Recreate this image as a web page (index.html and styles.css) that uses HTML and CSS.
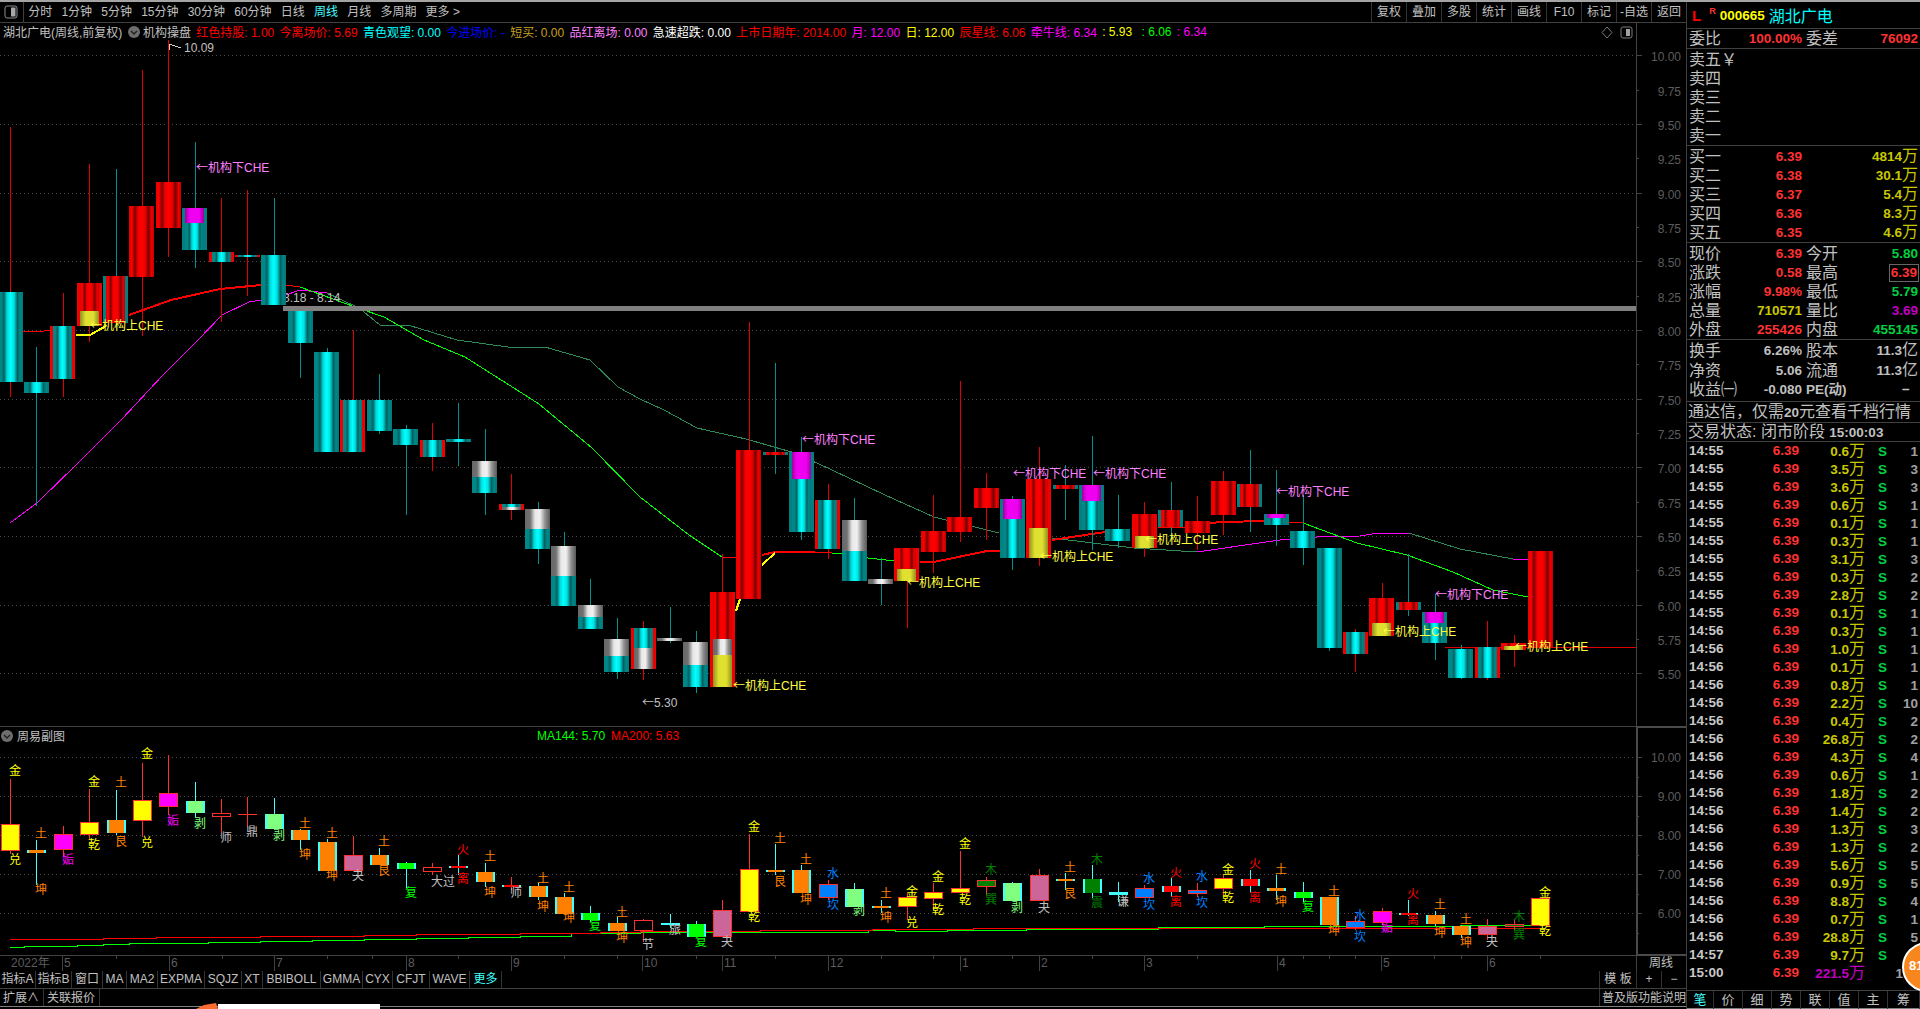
FILE: index.html
```html
<!DOCTYPE html>
<html lang="zh-CN">
<head>
    <meta charset="UTF-8">
    <title>湖北广电 周线</title>
    <link rel="stylesheet" href="styles.css">
</head>
<body>
<div class="app">
    <div class="main">
        <!-- period toolbar -->
        <div class="toolbar">
            <div class="periods">
                <span class="panel-btn"><svg width="14" height="14" viewBox="0 0 14 14"><rect x="1" y="1" width="12" height="12" rx="2" fill="none" stroke="#8c8c8c"/><rect x="7" y="2.5" width="4.5" height="9" fill="#a8a8a8"/></svg></span>
                <span>分时</span><span>1分钟</span><span>5分钟</span><span>15分钟</span><span>30分钟</span><span>60分钟</span><span>日线</span><span class="on">周线</span><span>月线</span><span>多周期</span><span>更多 &gt;</span>
            </div>
            <div class="tools">
                <span>复权</span><span>叠加</span><span>多股</span><span>统计</span><span>画线</span><span>F10</span><span>标记</span><span>-自选</span><span>返回</span>
            </div>
        </div>

        <!-- price chart -->
        <div class="pane pane-price">
            <svg id="priceChart" class="chart" width="1686" height="703" viewBox="0 23 1686 703"></svg>
            <div class="legend">
                <span class="gray">湖北广电(周线,前复权)</span>
                <svg class="fold" width="12" height="12" viewBox="0 0 12 12"><circle cx="6" cy="6" r="6" fill="#6e6e6e"/><path d="M3 5l3 3 3-3" fill="none" stroke="#222" stroke-width="1.5"/></svg>
                <span class="gray">机构操盘</span>
                <span class="red">红色持股: 1.00</span>
                <span class="red">今离场价: 5.69</span>
                <span class="cyan">青色观望: 0.00</span>
                <span class="blue">今进场价: -</span>
                <span class="gold">短买: 0.00</span>
                <span class="pink">品红离场: 0.00</span>
                <span class="white">急速超跌: 0.00</span>
                <span class="red">上市日期年: 2014.00</span>
                <span class="magenta">月: 12.00</span>
                <span class="yellow">日: 12.00</span>
                <span class="red">辰星线: 6.06</span>
                <span class="magenta">牵牛线: 6.34</span>
                <span class="yellow">: 5.93</span>
                <span class="green wide">: 6.06</span>
                <span class="magenta">: 6.34</span>
            </div>
        </div>

        <!-- sub chart and date axis -->
        <div class="pane pane-sub">
            <svg id="subChart" class="chart" width="1686" height="245" viewBox="0 726 1686 245"></svg>
            <div class="legend legend-sub">
                <svg class="fold" width="12" height="12" viewBox="0 0 12 12"><circle cx="6" cy="6" r="6" fill="#6e6e6e"/><path d="M3 5l3 3 3-3" fill="none" stroke="#222" stroke-width="1.5"/></svg>
                <span class="gray">周易副图</span>
                <span class="green ma">MA144: 5.70</span>
                <span class="red">MA200: 5.63</span>
            </div>
        </div>

        <div class="row-indicators">
            <div class="ind-tabs">
                <span>指标A</span><span>指标B</span><span>窗口</span><span>MA</span><span>MA2</span><span>EXPMA</span><span>SQJZ</span><span>XT</span><span>BBIBOLL</span><span>GMMA</span><span>CYX</span><span>CFJT</span><span>WAVE</span><span class="on">更多</span>
            </div>
            <div class="ind-right">
                <span class="spaced">模 板</span><span>+</span><span>−</span>
            </div>
        </div>
        <div class="row-bottom">
            <div class="bottom-tabs"><span>扩展∧</span><span>关联报价</span></div>
            <div class="bottom-right">普及版功能说明</div>
        </div>
    </div>

    <!-- quote panel -->
    <aside class="side">
        <div class="stock-head">
            <span class="mark-l">L</span><span class="mark-r">R</span><span class="code">000665</span><span class="name">湖北广电</span>
        </div>
        <div class="block block-ratio">
            <div class="qrow"><div class="cell"><span>委比</span><b class="red">100.00%</b></div><div class="cell"><span>委差</span><b class="red">76092</b></div></div>
        </div>
        <div class="block">
            <div class="qrow"><div class="cell"><span>卖五￥</span></div></div>
            <div class="qrow"><div class="cell"><span>卖四</span></div></div>
            <div class="qrow"><div class="cell"><span>卖三</span></div></div>
            <div class="qrow"><div class="cell"><span>卖二</span></div></div>
            <div class="qrow"><div class="cell"><span>卖一</span></div></div>
        </div>
        <div class="block">
            <div class="qrow"><div class="cell"><span>买一</span><b class="red">6.39</b></div><div class="cell end"><b class="olive">4814<i>万</i></b></div></div>
            <div class="qrow"><div class="cell"><span>买二</span><b class="red">6.38</b></div><div class="cell end"><b class="olive">30.1<i>万</i></b></div></div>
            <div class="qrow"><div class="cell"><span>买三</span><b class="red">6.37</b></div><div class="cell end"><b class="olive">5.4<i>万</i></b></div></div>
            <div class="qrow"><div class="cell"><span>买四</span><b class="red">6.36</b></div><div class="cell end"><b class="olive">8.3<i>万</i></b></div></div>
            <div class="qrow"><div class="cell"><span>买五</span><b class="red">6.35</b></div><div class="cell end"><b class="olive">4.6<i>万</i></b></div></div>
        </div>
        <div class="block">
            <div class="qrow"><div class="cell"><span>现价</span><b class="red">6.39</b></div><div class="cell"><span>今开</span><b class="up">5.80</b></div></div>
            <div class="qrow"><div class="cell"><span>涨跌</span><b class="red">0.58</b></div><div class="cell"><span>最高</span><b class="red boxed">6.39</b></div></div>
            <div class="qrow"><div class="cell"><span>涨幅</span><b class="red">9.98%</b></div><div class="cell"><span>最低</span><b class="up">5.79</b></div></div>
            <div class="qrow"><div class="cell"><span>总量</span><b class="olive">710571</b></div><div class="cell"><span>量比</span><b class="violet">3.69</b></div></div>
            <div class="qrow"><div class="cell"><span>外盘</span><b class="red">255426</b></div><div class="cell"><span>内盘</span><b class="up">455145</b></div></div>
        </div>
        <div class="block block-fund">
            <div class="qrow"><div class="cell"><span>换手</span><b>6.26%</b></div><div class="cell"><span>股本</span><b>11.3<i>亿</i></b></div></div>
            <div class="qrow"><div class="cell"><span>净资</span><b>5.06</b></div><div class="cell"><span>流通</span><b>11.3<i>亿</i></b></div></div>
            <div class="qrow"><div class="cell"><span>收益㈠</span><b>-0.080</b></div><div class="cell"><b>PE(动)</b><b class="dash">−</b></div></div>
        </div>
        <div class="notice">通达信，仅需<b>20</b>元查看千档行情</div>
        <div class="notice">交易状态: 闭市阶段 <b>15:00:03</b></div>
        <div id="tickList" class="ticks"></div>
        <div class="side-tabs">
            <span class="on">笔</span><span>价</span><span>细</span><span>势</span><span>联</span><span>值</span><span>主</span><span>筹</span>
        </div>
    </aside>
</div>

<div class="badge">81</div>
<svg class="taskbar-hint" width="190" height="6" viewBox="0 0 190 6"><path d="M0 6L8 2 20 0 22 6z" fill="#ff6a30"/><rect x="22" y="1" width="162" height="5" fill="#fff"/></svg>

<script src="chart.js"></script>
</body>
</html>
```

FILE: styles.css
```css
* { box-sizing: border-box; }

html, body {
    margin: 0;
    height: 100%;
    background: #000;
    overflow: hidden;
}

body {
    position: relative;
    width: 1920px;
    height: 1009px;
    color: #c0c0c0;
    font: 12px "Liberation Sans", "Noto Sans CJK SC", sans-serif;
}

.app {
    display: flex;
    height: 1009px;
    border-top: 2px solid #a4a4a4;
}

.main {
    width: 1686px;
    flex: none;
    display: flex;
    flex-direction: column;
}

/* colours */
.red { color: #ff3232; }
.legend .red { color: #f00; }
.cyan { color: #0ff; }
.blue { color: #00f; }
.gold { color: #c8a020; }
.pink { color: #ff80ff; }
.white { color: #fff; }
.magenta { color: #f0f; }
.yellow { color: #ff0; }
.green { color: #0f0; }
.gray { color: #c0c0c0; }
.olive { color: #c8c800; }
.up { color: #00d040; }
.violet { color: #c000c0; }

/* toolbar */
.toolbar {
    height: 21px;
    flex: none;
    display: flex;
    justify-content: space-between;
    border-bottom: 1px solid #404040;
}
.periods {
    display: flex;
    align-items: center;
    gap: 9.2px;
    padding-top: 1px;
    line-height: 19px;
}
.panel-btn {
    width: 24px;
    height: 20px;
    margin: -1px -5px 0 0;
    padding: 3px 0 0 4px;
    border-right: 1px solid #404040;
}
.periods .on, .ind-tabs .on, .side-tabs .on { color: #4ff; }
.tools { display: flex; }
.tools span {
    width: 35px;
    text-align: center;
    line-height: 21px;
    border-left: 1px solid #333;
}

/* chart panes */
.pane { position: relative; flex: none; }
.pane-price { height: 703px; }
.pane-sub { height: 245px; }
.chart { display: block; }
.chart text {
    font: 12px "Liberation Sans", "Noto Sans CJK SC", sans-serif;
}
.chart .arrow { font-family: "Noto Sans CJK SC", sans-serif; }

.legend {
    position: absolute;
    top: -1px;
    left: 3px;
    height: 19px;
    display: flex;
    align-items: center;
    gap: 5.3px;
    white-space: nowrap;
}
.legend .wide { margin-left: 4px; }
.legend .fold { margin: 0 -2px 0 0; }
.legend-sub { left: 1px; top: 0; gap: 6px; }
.legend-sub .ma { margin-left: 466px; }

/* rows under the charts */
.row-indicators {
    height: 17px;
    flex: none;
    display: flex;
    justify-content: space-between;
    line-height: 17px;
}
.ind-tabs {
    display: grid;
    grid-template-columns: 36px 36px 31px 24px 31px 47px 37px 21px 58px 42px 30px 37px 40px 32px;
    text-align: center;
}
.ind-tabs span { border-right: 1px solid #333; }
.ind-right {
    display: grid;
    grid-template-columns: 37px 25px 25px;
    text-align: center;
}
.ind-right span { border-left: 1px solid #333; }
.row-bottom {
    height: 19px;
    flex: none;
    display: flex;
    justify-content: space-between;
    border-top: 1px solid #404040;
    border-bottom: 1px solid #808080;
    line-height: 18px;
}
.bottom-tabs { display: flex; }
.bottom-tabs span {
    padding: 0 4px 0 3px;
    border-right: 1px solid #333;
}
.bottom-right {
    width: 87px;
    padding-left: 2px;
    border-left: 1px solid #333;
    white-space: nowrap;
    overflow: hidden;
}

/* quote panel */
.side {
    width: 234px;
    flex: none;
    display: flex;
    flex-direction: column;
    font-size: 16px;
    border-left: 1px solid #404040;
}
.side b {
    font-family: "Liberation Sans", "Noto Sans CJK SC", sans-serif;
    font-size: 13.5px;
    font-weight: bold;
}
.side i {
    font-family: "Noto Sans CJK SC", sans-serif;
    font-size: 16px;
    font-style: normal;
    font-weight: normal;
    line-height: 0;
}

.stock-head {
    height: 27px;
    flex: none;
    display: flex;
    align-items: center;
    border-bottom: 1px solid #404040;
}
.mark-l { margin-left: 5px; color: #f00; font: bold 15px "Liberation Sans", sans-serif; }
.mark-r { margin: -8px 0 0 8px; color: #ff3232; font: bold 9px "Liberation Sans", sans-serif; }
.stock-head .code { margin-left: 4px; color: #ff0; font: bold 13.5px "Liberation Sans", sans-serif; }
.stock-head .name { margin-left: 4px; color: #0ff; }

.block { flex: none; padding-top: 1px; border-bottom: 1px solid #404040; }
.block-ratio { height: 20px; padding-top: 0; }
.block-fund { height: 62px; padding-top: 1px; }
.block-fund .qrow { height: 19.5px; line-height: 19.5px; }
.qrow {
    height: 19px;
    padding: 0 1px 0 2px;
    display: grid;
    grid-template-columns: 113px 112px;
    column-gap: 4px;
    line-height: 19px;
    white-space: nowrap;
}
.cell { display: flex; justify-content: space-between; align-items: center; min-height: 0; }
.cell.end { justify-content: flex-end; }
.cell b { color: #c0c0c0; }
.cell b.red { color: #ff3232; }
.cell b.olive { color: #c8c800; }
.cell b.up { color: #00d040; }
.cell b.violet { color: #c000c0; }
.boxed {
    margin-right: -1px;
    padding: 0 1px;
    line-height: 16px;
    border: 1px solid #666;
}
.dash { margin-right: 8px; }

.notice {
    height: 21px;
    flex: none;
    padding-left: 1px;
    line-height: 20px;
    white-space: nowrap;
    border-bottom: 1px solid #404040;
}
.notice + .notice { height: 19px; line-height: 18px; }
.notice b { color: #c0c0c0; }

.ticks { flex: 1; min-height: 0; overflow: hidden; }
.tick {
    height: 18px;
    padding-left: 2px;
    display: grid;
    grid-template-columns: 110px 66px 22px 31px;
    line-height: 18px;
    white-space: nowrap;
}
.tick > div { height: 18px; }
.tick .time { display: flex; justify-content: space-between; }
.tick .vol { text-align: right; }
.tick .bs { text-align: right; }
.tick .cnt { text-align: right; }
.tick b { color: #c8c8c8; }
.tick .time b:last-child { color: #ff3232; }
.tick .vol b, .tick .vol i { color: #c8c800; }
.tick .vol.big b, .tick .vol.big i { color: #c000c0; }
.tick .bs b { color: #00d040; }
.tick .cnt b { color: #a0a0a0; }

.side-tabs {
    height: 19px;
    flex: none;
    display: grid;
    grid-template-columns: 27px 29px 29px 29px 29px 29px 29px 32px;
    font-size: 13px;
    line-height: 18px;
    text-align: center;
    border-top: 1px solid #404040;
    border-bottom: 1px solid #808080;
}
.side-tabs span { border-right: 1px solid #333; }

/* floating items on top of the window */
.badge {
    position: absolute;
    left: 1902px;
    top: 942px;
    width: 50px;
    height: 50px;
    padding-left: 5px;
    border-radius: 50%;
    background: #f7861d;
    border: 2px solid #fff;
    color: #fff;
    font: bold 13px/44px "Liberation Sans", sans-serif;
}
.taskbar-hint {
    position: absolute;
    left: 196px;
    top: 1003px;
}
```

FILE: chart.js
```js
// weekly kline, sub chart and tick list

const NS = 'http://www.w3.org/2000/svg';
const xOf = i => 10 + 26.38 * i;

function el(parent, tag, attrs, text) {
    const node = document.createElementNS(NS, tag);
    for (const k in attrs) node.setAttribute(k, attrs[k]);
    if (text !== undefined) node.textContent = text;
    parent.appendChild(node);
    return node;
}
function rect(svg, x, y, w, h, fill, extra) {
    return el(svg, 'rect', Object.assign({ x, y, width: w, height: h, fill, 'shape-rendering': 'crispEdges' }, extra || {}));
}
function poly(svg, pts, color, width) {
    el(svg, 'polyline', { points: pts.map(p => p.join(',')).join(' '), fill: 'none', stroke: color, 'stroke-width': width || 1, 'shape-rendering': 'crispEdges' });
}
function label(svg, x, y, str, color, anchor) {
    const t = el(svg, 'text', { x, y: y + 4, fill: color, 'text-anchor': anchor || 'start' });
    if (str[0] === '←') {
        el(t, 'tspan', { class: 'arrow' }, '←');
        el(t, 'tspan', {}, str.slice(1));
    } else {
        t.textContent = str;
    }
}
function gradient(defs, id, stops) {
    const g = el(defs, 'linearGradient', { id, x1: 0, y1: 0, x2: 1, y2: 0 });
    stops.forEach(s => el(g, 'stop', { offset: s[0], 'stop-color': s[1] }));
}

/* ---------- price chart ---------- */
const price = document.getElementById('priceChart');
const defs = el(price, 'defs', {});
gradient(defs, 'gr', [[0, '#e00000'], [.12, '#ff0000'], [.24, '#780000'], [.36, '#f00000'], [.5, '#ff0000'], [.64, '#f00000'], [.78, '#780000'], [.9, '#f00000'], [1, '#c00000']]);
gradient(defs, 'gc', [[0, '#008888'], [.14, '#008888'], [.24, '#006060'], [.36, '#00d8d8'], [.5, '#00ffff'], [.64, '#00e0e0'], [.78, '#006060'], [.88, '#008888'], [1, '#007878']]);
gradient(defs, 'gw', [[0, '#686868'], [.2, '#707070'], [.4, '#e8e8e8'], [.6, '#f0f0f0'], [.8, '#909090'], [1, '#585858']]);
gradient(defs, 'gm', [[0, '#a000a0'], [.25, '#f000f0'], [.75, '#f000f0'], [1, '#a000a0']]);
gradient(defs, 'gy', [[0, '#909020'], [.3, '#e0e030'], [.7, '#e0e030'], [1, '#909020']]);

const yPrice = p => 55.3 + (10 - p) * 137.3;

// grid + axis
for (let p = 10; p >= 5.5; p -= 0.25) {
    const y = Math.round(yPrice(p)) + 0.5;
    const major = Math.abs(p * 2 - Math.round(p * 2)) < 0.01;
    if (major) el(price, 'line', { x1: 0, y1: y, x2: 1636, y2: y, stroke: '#4a4a4a', 'stroke-dasharray': '1 3' });
    el(price, 'line', { x1: 1636, y1: y, x2: major ? 1642 : 1639, y2: y, stroke: '#444' });
    label(price, 1681, y + 1, p.toFixed(2), '#5c5c5c', 'end');
}
rect(price, 1636, 23, 1, 703, '#444');

// moving lines, drawn under the candles
const RED = '#f00', GRN = '#0f0', MAG = '#f0f', SEA = '#2e8b57', YEL = '#ff0';
poly(price, [[10, 523], [37, 503], [78, 463], [122, 419], [163, 375], [198, 340], [222, 315], [249, 302], [261, 300], [286, 295], [300, 290], [327, 293]], MAG);
poly(price, [[327, 293], [359, 308], [380, 325], [408, 325], [457, 340], [508, 347], [545, 347], [590, 360], [618, 387], [640, 399], [664, 410], [697, 428], [746, 439], [795, 453], [832, 470], [885, 495], [934, 517], [999, 533]], SEA);
poly(price, [[1052, 538], [1134, 548], [1197, 552]], SEA);
poly(price, [[1197, 552], [1280, 540], [1290, 539], [1317, 537], [1360, 536], [1378, 533], [1409, 533]], MAG);
poly(price, [[1409, 533], [1460, 549], [1513, 559]], SEA);
poly(price, [[1513, 559], [1528, 559]], MAG);
poly(price, [[300, 287], [355, 307], [384, 317], [424, 340], [465, 357], [539, 404], [592, 448], [640, 497], [689, 535], [722, 557]], GRN);
poly(price, [[832, 553], [842, 553], [868, 558], [895, 561]], GRN);
poly(price, [[1303, 523], [1357, 543], [1407, 555], [1453, 572], [1493, 590], [1528, 597]], GRN);
poly(price, [[22, 331], [44, 331], [52, 330]], RED);
poly(price, [[129, 315], [171, 300], [220, 289], [261, 285]], RED, 2);
poly(price, [[286, 285], [300, 287]], RED);
poly(price, [[722, 557], [737, 557]], RED);
poly(price, [[762, 555], [775, 552], [815, 552]], RED, 2);
poly(price, [[815, 552], [832, 553]], RED);
poly(price, [[920, 562], [934, 562], [987, 551], [1000, 551]], RED, 2);
poly(price, [[1052, 540], [1105, 532]], RED, 2);
poly(price, [[1158, 528], [1185, 527]], RED);
poly(price, [[1209, 523], [1224, 522], [1264, 521]], RED, 2);
poly(price, [[1264, 522], [1303, 523]], RED);
rect(price, 1445, 647, 191, 1, '#e00000');
label(price, 283, 298, '8.18 - 8.14', '#c0c0c0');

// candles: wick top, wick bottom, wick colour, edge colour, then y0, fill, y1, fill, y2...
const c = 'gc', r = 'gr', w = 'gw', m = 'gm', y = 'gy';
const candles = [
    [127, 397, 'r', 0, 292, c, 382],
    [347, 506, 't', 0, 382, c, 393],
    [293, 397, 'r', 'r', 326, c, 379],
    [164, 342, 'r', 'r', 283, r, 311, y, 326],
    [169, 330, 't', 't', 276, r, 323],
    [70, 336, 'r', 0, 206, r, 277],
    [40, 257, 'r', 0, 182, r, 228],
    [142, 268, 't', 't', 208, m, 223, c, 250],
    [198, 322, 'r', 'r', 252, c, 262],
    [190, 296, 'r', 'r', 255, c, 257],
    [198, 305, 't', 0, 255, c, 305],
    [311, 378, 't', 0, 311, c, 343],
    [348, 452, 't', 0, 352, c, 452],
    [330, 452, 'r', 'r', 400, c, 452],
    [374, 434, 't', 0, 400, c, 431],
    [425, 515, 't', 0, 429, c, 445],
    [423, 471, 'r', 'r', 440, c, 457],
    [403, 466, 't', 0, 439, c, 442],
    [429, 515, 't', 0, 461, w, 477, c, 493],
    [474, 520, 'r', 'r', 504, c, 507, w, 510],
    [502, 564, 't', 0, 509, w, 529, c, 549],
    [532, 606, 't', 0, 546, w, 576, c, 606],
    [579, 629, 't', 0, 605, w, 617, c, 629],
    [618, 679, 't', 0, 639, w, 656, c, 672],
    [621, 680, 'r', 'r', 628, c, 648, w, 669],
    [607, 643, 't', 0, 638, w, 641],
    [631, 693, 't', 0, 642, w, 665, c, 687],
    [554, 687, 'r', 'r', 592, r, 639, w, 655, y, 687],
    [322, 599, 'r', 0, 450, r, 599],
    [363, 474, 't', 't', 452, r, 455],
    [437, 540, 't', 't', 452, m, 479, c, 532],
    [484, 559, 'r', 'r', 500, c, 549],
    [498, 581, 't', 0, 520, w, 551, c, 581],
    [558, 605, 't', 0, 579, w, 584],
    [548, 628, 'r', 'r', 548, r, 569, y, 581],
    [495, 573, 'r', 0, 531, r, 552],
    [381, 542, 'r', 0, 517, r, 532],
    [473, 540, 'r', 0, 488, r, 508],
    [496, 570, 't', 't', 499, m, 519, c, 558],
    [447, 566, 'r', 'r', 479, r, 528, y, 558],
    [465, 520, 't', 't', 485, r, 489],
    [436, 550, 't', 't', 485, m, 501, c, 530],
    [495, 548, 't', 0, 529, c, 541],
    [502, 557, 'r', 'r', 514, r, 536, y, 548],
    [482, 540, 't', 't', 510, r, 527],
    [496, 550, 'r', 0, 521, r, 533],
    [471, 535, 'r', 0, 481, r, 515],
    [450, 532, 't', 't', 484, r, 507],
    [470, 546, 't', 't', 514, m, 518, c, 525],
    [495, 565, 't', 0, 531, c, 548],
    [548, 651, 't', 0, 548, c, 648],
    [629, 672, 'r', 'r', 632, c, 654],
    [583, 636, 'r', 'r', 598, r, 623, y, 636],
    [554, 616, 't', 't', 602, r, 610],
    [594, 660, 't', 't', 612, m, 623, c, 643],
    [645, 679, 't', 0, 649, c, 678],
    [621, 680, 'r', 'r', 647, c, 678],
    [635, 667, 'r', 'r', 643, r, 646, y, 650],
    [551, 647, 'r', 0, 551, r, 647]
];
const EDGE = { r: '#f00000', t: '#008080' };
const WICK = { r: '#e00000', t: '#009090' };
candles.forEach((b, i) => {
    const cx = xOf(i);
    const left = Math.round(cx - 12.5);
    rect(price, Math.round(cx), b[0], 1, b[1] - b[0], WICK[b[2]]);
    const segs = b.slice(4);
    if (b[3]) rect(price, left, segs[0], 25, segs[segs.length - 1] - segs[0], EDGE[b[3]]);
    const inset = b[3] ? 3 : 0;
    for (let s = 0; s + 2 < segs.length; s += 2) {
        rect(price, left + inset, segs[s], 25 - inset * 2, segs[s + 2] - segs[s], 'url(#' + segs[s + 1] + ')');
    }
});

// support band and thick signal pieces
rect(price, 283, 306, 1353, 5, '#808080');
poly(price, [[76, 335], [90, 335], [106, 326]], YEL, 2);
poly(price, [[762, 565], [775, 553]], YEL, 2);
poly(price, [[736, 611], [740, 599]], YEL, 2);

// markers
const DOWN = '#ff80ff', UP = '#ffff40';
[[196, 168], [802, 440], [1013, 474], [1093, 474], [1276, 492], [1435, 595]].forEach(p => label(price, p[0], p[1], '←机构下CHE', DOWN));
[[90, 326], [733, 686], [907, 583], [1040, 557], [1145, 540], [1383, 632], [1515, 647]].forEach(p => label(price, p[0], p[1], '←机构上CHE', UP));
poly(price, [[169, 50], [169, 44], [175, 46], [181, 48]], '#d0d0d0');
label(price, 184, 48, '10.09', '#c0c0c0');
label(price, 642, 703, '←5.30', '#c0c0c0');

// small icons at the top right of the chart
el(price, 'polygon', { points: '1607,27 1612,32.5 1607,38 1602,32.5', fill: 'none', stroke: '#7a7a7a' });
el(price, 'rect', { x: 1621, y: 27, width: 11, height: 11, rx: 2, fill: 'none', stroke: '#7a7a7a' });
rect(price, 1626, 29, 4, 7, '#a0a0a0');

/* ---------- sub chart ---------- */
const sub = document.getElementById('subChart');
rect(sub, 0, 726, 1686, 1, '#404040');
rect(sub, 0, 955, 1686, 1, '#404040');
rect(sub, 0, 971, 1686, 1, '#404040');

const ySub = p => 757 + (10 - p) * 39;
for (let p = 10; p >= 5.5; p -= 0.5) {
    const yy = Math.round(ySub(p)) + 0.5;
    const major = p === Math.floor(p);
    if (major) {
        el(sub, 'line', { x1: 0, y1: yy, x2: 1636, y2: yy, stroke: '#4a4a4a', 'stroke-dasharray': '1 3' });
        label(sub, 1681, yy, p.toFixed(2), '#5c5c5c', 'end');
    }
    el(sub, 'line', { x1: 1636, y1: yy, x2: major ? 1642 : 1639, y2: yy, stroke: '#444' });
}
rect(sub, 1636, 727, 2, 228, '#4a4a4a');
rect(sub, 1636, 726, 50, 2, '#4a4a4a');
rect(sub, 1636, 954, 50, 2, '#4a4a4a');
rect(sub, 1636, 956, 1, 15, '#404040');
label(sub, 1661, 963, '周线', '#c0c0c0', 'middle');

// MA144 / MA200 as stepped lines
function stepped(points, color) {
    const pts = [];
    points.forEach((p, i) => {
        if (i) pts.push([p[0], points[i - 1][1]]);
        pts.push(p);
    });
    poly(sub, pts, color);
}
stepped([[10, 947], [24, 946], [77, 945], [103, 944], [129, 943], [156, 943], [208, 942], [260, 941], [312, 940], [364, 939], [416, 938], [468, 937], [520, 936], [571, 933], [640, 932], [762, 932], [868, 930], [895, 931], [947, 930], [1026, 929], [1158, 927], [1264, 926], [1460, 925], [1540, 925]], GRN);
stepped([[10, 939], [103, 938], [156, 937], [260, 936], [364, 935], [416, 934], [520, 933], [600, 932], [640, 931], [760, 930], [872, 929], [973, 928], [1540, 928]], RED);

// sub candles: wick top, wick bottom, wick colour, body top, body bottom, body kind, top label, y, bottom label, y
const SKIN = {
    y: ['#ff0', '#ff3030'], m: ['#f0f', '#ff3030'], p: ['#cc6699', '#ff3030'], b: ['#0080ff', '#ff3030'],
    h: ['#000', '#ff3030'], d: ['#008000', '#ff3030'], o: ['#ff8000', '#40ffff'], g: ['#80ff80', '#40ffff'],
    G: ['#0f0', '#40ffff'], R: ['#f00', '#40ffff'], D: ['#008000', '#40ffff'], n: ['#40ffff', '#40ffff']
};
const GUA = {
    '金': '#ff0', '乾': '#ff0', '兑': '#ff0', '土': '#ff8000', '坤': '#ff8000', '艮': '#ff8000', '姤': '#f0f',
    '剥': '#80ff80', '复': '#0f0', '火': '#f00', '离': '#f00', '水': '#0080ff', '坎': '#0080ff',
    '木': '#008000', '巽': '#008000', '震': '#008000'
};
const subBars = [
    [779, 854, 'r', 824, 851, 'y', '金', 771, '兑', 860],
    [840, 885, 't', 850, 853, 'o', '土', 834, '坤', 890],
    [826, 857, 'r', 834, 850, 'm', '', 0, '姤', 860],
    [789, 840, 'r', 822, 835, 'y', '金', 782, '乾', 845],
    [790, 835, 't', 820, 833, 'o', '土', 783, '艮', 842],
    [763, 837, 'r', 800, 821, 'y', '金', 754, '兑', 843],
    [755, 815, 'r', 793, 807, 'm', '', 0, '姤', 821],
    [782, 818, 't', 801, 813, 'g', '', 0, '剥', 824],
    [799, 833, 'r', 813, 817, 'h', '', 0, '师', 838],
    [797, 827, 'r', 814, 815, 'h', '', 0, '鼎', 832],
    [798, 830, 't', 814, 829, 'g', '', 0, '剥', 836],
    [829, 850, 't', 830, 840, 'o', '土', 824, '坤', 855],
    [839, 871, 't', 842, 871, 'o', '土', 834, '坤', 876],
    [836, 871, 'r', 855, 871, 'p', '', 0, '夬', 876],
    [848, 865, 't', 855, 865, 'o', '土', 842, '艮', 871],
    [862, 888, 't', 863, 869, 'G', '', 0, '复', 893],
    [863, 875, 'r', 867, 872, 'h', '', 0, '大过', 882],
    [855, 875, 't', 866, 867, 'R', '火', 850, '离', 879],
    [863, 887, 't', 872, 882, 'o', '土', 857, '坤', 893],
    [877, 890, 'r', 885, 887, 'R', '', 0, '师', 893],
    [883, 900, 't', 886, 897, 'o', '土', 879, '坤', 907],
    [893, 914, 't', 897, 914, 'o', '土', 888, '坤', 918],
    [906, 922, 't', 913, 920, 'G', '', 0, '复', 926],
    [917, 931, 't', 923, 931, 'o', '土', 913, '坤', 938],
    [919, 942, 'r', 920, 931, 'h', '', 0, '节', 945],
    [914, 928, 't', 923, 924, 'n', '', 0, '旅', 930],
    [921, 937, 't', 924, 937, 'G', '', 0, '复', 942],
    [900, 937, 'r', 910, 937, 'p', '', 0, '夬', 942],
    [834, 912, 'r', 869, 912, 'y', '金', 827, '乾', 917],
    [844, 875, 't', 870, 871, 'o', '土', 839, '艮', 882],
    [865, 893, 't', 870, 893, 'o', '土', 860, '坤', 900],
    [880, 900, 'r', 884, 898, 'b', '水', 874, '坎', 905],
    [883, 907, 't', 889, 907, 'g', '', 0, '剥', 911],
    [900, 913, 't', 906, 908, 'o', '土', 894, '坤', 918],
    [893, 920, 'r', 897, 907, 'y', '金', 892, '兑', 923],
    [883, 910, 'r', 892, 899, 'y', '金', 877, '乾', 910],
    [851, 893, 'r', 888, 893, 'y', '金', 844, '乾', 900],
    [877, 895, 'r', 880, 887, 'd', '木', 870, '巽', 900],
    [882, 901, 't', 883, 901, 'g', '', 0, '剥', 908],
    [869, 901, 'r', 875, 901, 'p', '', 0, '夬', 908],
    [873, 890, 't', 879, 880, 'o', '土', 868, '艮', 894],
    [865, 898, 't', 879, 893, 'D', '木', 860, '震', 903],
    [882, 902, 't', 892, 895, 'n', '', 0, '谦', 902],
    [885, 898, 'r', 888, 898, 'b', '水', 879, '坎', 905],
    [878, 897, 't', 886, 892, 'R', '火', 873, '离', 902],
    [883, 897, 'r', 890, 894, 'b', '水', 877, '坎', 903],
    [875, 895, 'r', 878, 889, 'y', '金', 870, '乾', 898],
    [870, 893, 't', 879, 886, 'R', '火', 864, '离', 898],
    [875, 900, 't', 888, 891, 'o', '土', 870, '坤', 902],
    [882, 902, 't', 892, 898, 'G', '', 0, '复', 907],
    [897, 925, 't', 897, 925, 'o', '土', 892, '坤', 931],
    [916, 930, 'r', 921, 928, 'b', '水', 916, '坎', 937],
    [908, 925, 'r', 911, 923, 'm', '', 0, '姤', 928],
    [900, 916, 't', 913, 914, 'R', '火', 894, '离', 920],
    [911, 926, 't', 915, 924, 'o', '土', 905, '坤', 933],
    [925, 938, 't', 926, 935, 'o', '土', 920, '坤', 943],
    [919, 940, 'r', 926, 935, 'p', '', 0, '夬', 942],
    [920, 930, 'r', 924, 927, 'd', '木', 917, '巽', 935],
    [898, 926, 'r', 898, 926, 'y', '金', 893, '乾', 931]
];
subBars.forEach((b, i) => {
    const cx = Math.round(xOf(i));
    const left = cx - 9;
    rect(sub, cx, b[0], 1, b[1] - b[0], b[2] === 'r' ? '#ff3030' : '#40ffff');
    const skin = SKIN[b[5]];
    const h = b[4] - b[3];
    if (skin[1] === '#ff3030') {
        if (h <= 1) {
            rect(sub, left, b[3], 19, 1, skin[1]);
        } else {
            rect(sub, left, b[3], 19, h, skin[1]);
            rect(sub, left + 1, b[3] + 1, 17, h - 2, skin[0]);
        }
    } else {
        rect(sub, left, b[3], 19, Math.max(h, 2), skin[1]);
        rect(sub, left + 2, b[3], 15, Math.max(h, 2), skin[0]);
    }
    if (b[6]) label(sub, cx - 1, b[7], b[6], GUA[b[6]]);
    if (b[8]) label(sub, cx - 1, b[9], b[8], GUA[b[8]] || '#c0c0c0');
});

// date axis
label(sub, 11, 963, '2022年', '#5c5c5c');
[[62, '5'], [169, '6'], [274, '7'], [406, '8'], [511, '9'], [642, '10'], [722, '11'], [828, '12'], [960, '1'], [1039, '2'], [1144, '3'], [1277, '4'], [1381, '5'], [1487, '6']].forEach(m => {
    rect(sub, m[0], 956, 1, 15, '#404040');
    label(sub, m[0] + 2, 963, m[1], '#5c5c5c');
});
[116, 222, 327, 372, 458, 564, 617, 696, 775, 881, 933, 1012, 1092, 1197, 1303, 1329, 1355, 1434, 1461, 1540].forEach(x => {
    rect(sub, x, 956, 1, 3, '#404040');
});

/* ---------- tick list ---------- */
const ticks = [
    ['14:55', '0.6', 1], ['14:55', '3.5', 3], ['14:55', '3.6', 3], ['14:55', '0.6', 1], ['14:55', '0.1', 1],
    ['14:55', '0.3', 1], ['14:55', '3.1', 3], ['14:55', '0.3', 2], ['14:55', '2.8', 2], ['14:55', '0.1', 1],
    ['14:56', '0.3', 1], ['14:56', '1.0', 1], ['14:56', '0.1', 1], ['14:56', '0.8', 1], ['14:56', '2.2', 10],
    ['14:56', '0.4', 2], ['14:56', '26.8', 2], ['14:56', '4.3', 4], ['14:56', '0.6', 1], ['14:56', '1.8', 2],
    ['14:56', '1.4', 2], ['14:56', '1.3', 3], ['14:56', '1.3', 2], ['14:56', '5.6', 5], ['14:56', '0.9', 5],
    ['14:56', '8.8', 4], ['14:56', '0.7', 1], ['14:56', '28.8', 5], ['14:57', '9.7', ''], ['15:00', '221.5', '100']
];
const list = document.getElementById('tickList');
ticks.forEach(t => {
    const row = document.createElement('div');
    const big = t[0] === '15:00';
    row.className = 'tick';
    row.innerHTML = `<div class="time"><b>${t[0]}</b><b>6.39</b></div>` +
        `<div class="vol${big ? ' big' : ''}"><b>${t[1]}</b><i>万</i></div>` +
        `<div class="bs"><b>${big ? '' : 'S'}</b></div><div class="cnt"><b>${t[2]}</b></div>`;
    list.appendChild(row);
});
```
